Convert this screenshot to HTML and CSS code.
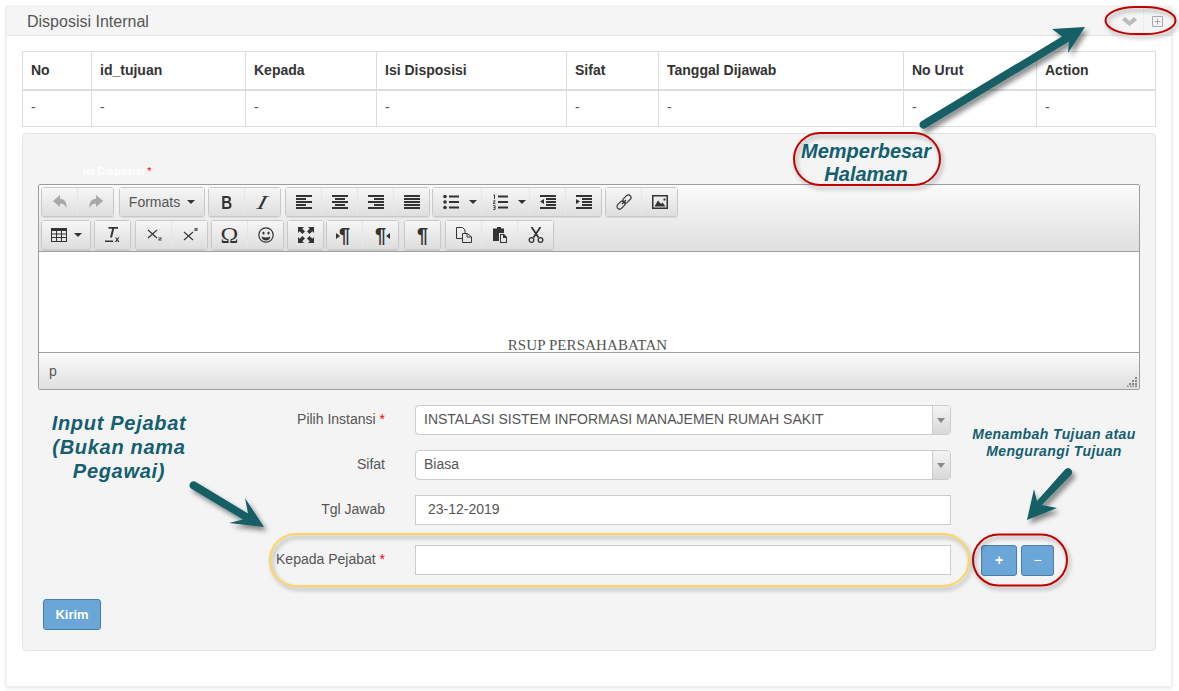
FILE: index.html
```html
<!DOCTYPE html>
<html lang="id">
<head>
    <meta charset="UTF-8">
    <title>Disposisi Internal</title>
    <link rel="stylesheet" href="styles.css">
</head>
<body>
    <svg class="defs" width="0" height="0">
        <symbol id="i-undo" viewBox="0 0 16 16"><path d="M8 1 1 7l7 6V9.500c3 0 5 1.200 6.500 4.500.5-5.500-1.800-9-6.500-9.300z"/></symbol>
        <symbol id="i-redo" viewBox="0 0 16 16"><path d="M8 1l7 6-7 6V9.500c-3 0-5 1.200-6.500 4.500C1 8.500 3.300 5 8 4.700z"/></symbol>
        <symbol id="i-left" viewBox="0 0 16 16"><path d="M0 1h16v2H0zM0 4h10v2H0zM0 7h16v2H0zM0 10h10v2H0zM0 13h16v2H0z"/></symbol>
        <symbol id="i-center" viewBox="0 0 16 16"><path d="M0 1h16v2H0zM3 4h10v2H3zM0 7h16v2H0zM3 10h10v2H3zM0 13h16v2H0z"/></symbol>
        <symbol id="i-right" viewBox="0 0 16 16"><path d="M0 1h16v2H0zM6 4h10v2H6zM0 7h16v2H0zM6 10h10v2H6zM0 13h16v2H0z"/></symbol>
        <symbol id="i-justify" viewBox="0 0 16 16"><path d="M0 1h16v2H0zM0 4h16v2H0zM0 7h16v2H0zM0 10h16v2H0zM0 13h16v2H0z"/></symbol>
        <symbol id="i-bullist" viewBox="0 0 16 16"><circle cx="2" cy="2.500" r="1.800"/><circle cx="2" cy="8" r="1.800"/><circle cx="2" cy="13.500" r="1.800"/><path d="M6 1.500h10v2H6zM6 7h10v2H6zM6 12.500h10v2H6z"/></symbol>
        <symbol id="i-numlist" viewBox="0 0 16 16"><path d="M6 1.500h10v2H6zM6 7h10v2H6zM6 12.500h10v2H6z"/><path d="M1.500 1 3 .3V5H2V1.700l-.5.2zM1 6.500h2.500v.8L2 9.300h1.500v.7H1v-.7l1.500-2H1zM1 11.300h2.500v4.500H1V15h1.500v-1H1.500v-.7h1v-1.200H1z"/></symbol>
        <symbol id="i-outdent" viewBox="0 0 16 16"><path d="M0 1h16v2H0zM6 4h10v2H6zM6 7h10v2H6zM6 10h10v2H6zM0 13h16v2H0zM4 5v5L0 7.500z"/></symbol>
        <symbol id="i-indent" viewBox="0 0 16 16"><path d="M0 1h16v2H0zM6 4h10v2H6zM6 7h10v2H6zM6 10h10v2H6zM0 13h16v2H0zM0 5v5l4-2.500z"/></symbol>
        <symbol id="i-link" viewBox="0 0 16 16"><g fill="none" stroke="#333" stroke-width="1.200"><rect x="8.300" y=".3" width="5.200" height="9.400" rx="2.600" transform="rotate(45 10.900 5)"/><rect x="2.500" y="6.300" width="5.200" height="9.400" rx="2.600" transform="rotate(45 5.100 11)"/><path d="M6 10l4-4"/></g></symbol>
        <symbol id="i-image" viewBox="0 0 16 16"><path fill-rule="evenodd" d="M0 1h16v14H0zM1.500 2.500v11h13v-11z"/><path d="M2.500 12.500l3.500-6 3 3.500 1.500-1.500 3 4zM11.500 4.500h2v2h-2z"/></symbol>
        <symbol id="i-table" viewBox="0 0 16 16"><path fill-rule="evenodd" d="M0 1h16v14H0zM1 4v2.500h4V4zm5 0v2.500h4V4zm5 0v2.500h4V4zM1 7.500V10h4V7.500zm5 0V10h4V7.500zm5 0V10h4V7.500zM1 11v3h4v-3zm5 0v3h4v-3zm5 0v3h4v-3z"/></symbol>
        <symbol id="i-clear" viewBox="0 0 16 16"><path d="M3.500 0H13v1.800H9.200L7 10.500H5l2.200-8.700H3.500zM0 13.500h8V15H0zM10 10.500h1.300l.9 1.300.9-1.300h1.400l-1.600 2 1.600 2.500h-1.400l-.9-1.500-.9 1.500H9.900l1.600-2.500z"/></symbol>
        <symbol id="i-sub" viewBox="0 0 16 16"><path d="M2 3l9 8M11 3l-9 8" fill="none" stroke="#333" stroke-width="1.100"/><path d="M12.500 10.500h3v1.700h-2v.6h2v.7h-3v-1.700h2v-.6h-2z"/></symbol>
        <symbol id="i-sup" viewBox="0 0 16 16"><path d="M2 5l9 8M11 5l-9 8" fill="none" stroke="#333" stroke-width="1.100"/><path d="M12.500 1h3v1.700h-2v.6h2V4h-3V2.300h2v-.6h-2z"/></symbol>
        <symbol id="i-smile" viewBox="0 0 16 16"><circle cx="8" cy="8" r="7.200" fill="none" stroke="#333" stroke-width="1.200"/><ellipse cx="5.500" cy="6" rx="1.100" ry="1.500"/><ellipse cx="10.500" cy="6" rx="1.100" ry="1.500"/><path d="M3.500 9.500c2.500 1.300 6.500 1.300 9 0-.4 2.700-2.300 4-4.500 4s-4.100-1.300-4.500-4z"/></symbol>
        <symbol id="i-full" viewBox="0 0 16 16"><path d="M0 0h6L4.300 1.700 7 4.400 4.400 7 1.700 4.300 0 6zM16 0v6l-1.700-1.700L11.600 7 9 4.400l2.700-2.700L10 0zM0 16v-6l1.700 1.700L4.400 9 7 11.600l-2.700 2.700L6 16zM16 16h-6l1.700-1.700L9 11.600 11.600 9l2.700 2.700L16 10z"/></symbol>
        <symbol id="i-copy" viewBox="0 0 16 16"><g fill="none" stroke="#333" stroke-width="1"><path d="M6.500 11.500h-6V.5h6l2.500 2.500v3"/><path d="M6.500 6.500h5l4 3.500v5.500h-9zM11 6.500V10h4.500"/></g></symbol>
        <symbol id="i-paste" viewBox="0 0 16 16"><path d="M5 0h4v1.500h3V6H7v8H1V1.500h4z"/><path fill-rule="evenodd" d="M8 7h4l3 3v6H8zm1 1v7h5v-4h-3V8z"/></symbol>
        <symbol id="i-cut" viewBox="0 0 16 16"><path d="M3.500 0l7 10.500M12.500 0l-7 10.500" fill="none" stroke="#333" stroke-width="1.800"/><circle cx="3.500" cy="13" r="2.300" fill="none" stroke="#333" stroke-width="1.300"/><circle cx="12.500" cy="13" r="2.300" fill="none" stroke="#333" stroke-width="1.300"/></symbol>
    </svg>

    <div class="portlet">
        <div class="portlet-title">
            <span class="caption">Disposisi Internal</span>
            <div class="tools">
                <svg class="chevron" width="15" height="9" viewBox="0 0 15 9"><path d="M0 3 3 0l4.500 4L12 0l3 3-7.500 6z"/></svg>
                <span class="tool-sep"></span>
                <svg class="expand" width="11" height="11" viewBox="0 0 11 11"><path d="M.5.5h10v10H.5zM5.500 2.500v6M2.500 5.500h6"/></svg>
            </div>
        </div>
        <div class="portlet-body">
            <table class="data-table">
                <thead>
                    <tr>
                        <th class="col-no">No</th>
                        <th class="col-id">id_tujuan</th>
                        <th class="col-kepada">Kepada</th>
                        <th class="col-isi">Isi Disposisi</th>
                        <th class="col-sifat">Sifat</th>
                        <th class="col-tgl">Tanggal Dijawab</th>
                        <th class="col-urut">No Urut</th>
                        <th>Action</th>
                    </tr>
                </thead>
                <tbody>
                    <tr><td>-</td><td>-</td><td>-</td><td>-</td><td>-</td><td>-</td><td>-</td><td>-</td></tr>
                </tbody>
            </table>

            <div class="well">
                <div class="editor-label">Isi Disposisi <span class="req">*</span></div>
                <div class="editor">
                    <div class="toolbar">
                        <div class="tool-row">
                            <div class="btn-group">
                                <button class="tb off"><svg class="ico"><use href="#i-undo"/></svg></button>
                                <button class="tb off"><svg class="ico"><use href="#i-redo"/></svg></button>
                            </div>
                            <div class="btn-group ml2"><button class="tb formats">Formats <i class="caret"></i></button></div>
                            <div class="btn-group">
                                <button class="tb"><span class="glyph bold">B</span></button>
                                <button class="tb"><span class="glyph ital">I</span></button>
                            </div>
                            <div class="btn-group ml1">
                                <button class="tb"><svg class="ico"><use href="#i-left"/></svg></button>
                                <button class="tb"><svg class="ico"><use href="#i-center"/></svg></button>
                                <button class="tb"><svg class="ico"><use href="#i-right"/></svg></button>
                                <button class="tb"><svg class="ico"><use href="#i-justify"/></svg></button>
                            </div>
                            <div class="btn-group mln1">
                                <button class="tb wide"><svg class="ico"><use href="#i-bullist"/></svg><i class="caret"></i></button>
                                <button class="tb wide"><svg class="ico"><use href="#i-numlist"/></svg><i class="caret"></i></button>
                                <button class="tb"><svg class="ico"><use href="#i-outdent"/></svg></button>
                                <button class="tb"><svg class="ico"><use href="#i-indent"/></svg></button>
                            </div>
                            <div class="btn-group">
                                <button class="tb"><svg class="ico"><use href="#i-link"/></svg></button>
                                <button class="tb"><svg class="ico"><use href="#i-image"/></svg></button>
                            </div>
                        </div>
                        <div class="tool-row">
                            <div class="btn-group"><button class="tb table-btn"><svg class="ico"><use href="#i-table"/></svg><i class="caret"></i></button></div>
                            <div class="btn-group"><button class="tb"><svg class="ico"><use href="#i-clear"/></svg></button></div>
                            <div class="btn-group ml1">
                                <button class="tb"><svg class="ico"><use href="#i-sub"/></svg></button>
                                <button class="tb"><svg class="ico"><use href="#i-sup"/></svg></button>
                            </div>
                            <div class="btn-group">
                                <button class="tb"><span class="glyph omega">Ω</span></button>
                                <button class="tb"><svg class="ico"><use href="#i-smile"/></svg></button>
                            </div>
                            <div class="btn-group"><button class="tb"><svg class="ico"><use href="#i-full"/></svg></button></div>
                            <div class="btn-group mln1">
                                <button class="tb"><span class="glyph para ltr">¶</span></button>
                                <button class="tb"><span class="glyph para rtl">¶</span></button>
                            </div>
                            <div class="btn-group ml2"><button class="tb"><span class="glyph para">¶</span></button></div>
                            <div class="btn-group ml1">
                                <button class="tb"><svg class="ico"><use href="#i-copy"/></svg></button>
                                <button class="tb"><svg class="ico"><use href="#i-paste"/></svg></button>
                                <button class="tb"><svg class="ico"><use href="#i-cut"/></svg></button>
                            </div>
                        </div>
                    </div>
                    <div class="edit-area"><p class="letterhead">RSUP PERSAHABATAN</p></div>
                    <div class="statusbar">
                        <span>p</span>
                        <svg class="grip" width="10" height="10" viewBox="0 0 10 10"><path d="M8 0h2v2H8zM5 3h2v2H5zM8 3h2v2H8zM2 6h2v2H2zM5 6h2v2H5zM8 6h2v2H8zM0 8.500h1.500V10H0zM3 8.500h1.500V10H3zM5.500 8.500H7V10H5.500zM8 8.500h2V10H8z"/></svg>
                    </div>
                </div>

                <div class="form-row">
                    <label>Pilih Instansi <span class="req">*</span></label>
                    <div class="select"><span>INSTALASI SISTEM INFORMASI MANAJEMEN RUMAH SAKIT</span><b class="select-arrow"></b></div>
                </div>
                <div class="form-row">
                    <label>Sifat</label>
                    <div class="select"><span>Biasa</span><b class="select-arrow"></b></div>
                </div>
                <div class="form-row">
                    <label>Tgl Jawab</label>
                    <div class="input">23-12-2019</div>
                </div>
                <div class="form-row last">
                    <label>Kepada Pejabat <span class="req">*</span></label>
                    <div class="input"></div>
                    <div class="add-remove">
                        <button class="btn-blue plus">+</button>
                        <button class="btn-blue minus">−</button>
                    </div>
                </div>
                <button class="btn-blue kirim">Kirim</button>
            </div>
        </div>
    </div>

    <!-- anotasi di atas screenshot -->
    <svg class="overlay" width="1179" height="691" viewBox="0 0 1179 691">
        <defs>
            <filter id="shade" x="-20%" y="-20%" width="140%" height="140%">
                <feDropShadow dx="3" dy="4" stdDeviation="2.500" flood-color="#000" flood-opacity="0.45"/>
            </filter>
        </defs>
        <g filter="url(#shade)" fill="#135e65" stroke="none">
            <path d="M921 121.600 1062 36.400 1052 29 1085 27 1068 53 1069 41.400 925 128.400a4 4 0 0 1-4-6.800z"/>
            <path d="M195 481.600 248 513.400 245 498 264 527 229 523 243 519.600 191 488.400a4 4 0 0 1 4-6.800z"/>
            <path d="M1065 469.500a4 4 0 0 1 6 5.500L1042 505 1057 508 1027 520 1034 489 1037 501z"/>
        </g>
        <g fill="none" stroke-width="2">
            <rect class="oval-red" x="1105.500" y="7" width="70" height="27" rx="30" ry="13.500"/>
            <rect class="oval-red" x="794" y="133" width="146" height="52" rx="26"/>
            <rect class="oval-red" x="973" y="534.500" width="94" height="51" rx="25.500"/>
            <rect class="oval-yellow" x="270" y="534" width="699" height="52" rx="26"/>
        </g>
    </svg>
    <div class="note note-zoom">Memperbesar<br>Halaman</div>
    <div class="note note-input">Input Pejabat<br>(Bukan nama<br>Pegawai)</div>
    <div class="note note-add">Menambah Tujuan atau<br>Mengurangi Tujuan</div>
</body>
</html>
```

FILE: styles.css
```css
* {
    box-sizing: border-box;
}
body {
    position: relative;
    width: 1179px;
    height: 691px;
    margin: 0;
    overflow: hidden;
    background: #fff;
    font-family: "Liberation Sans", Arial, sans-serif;
    font-size: 14px;
    color: #555;
}
.defs {
    position: absolute;
}

/* portlet */
.portlet {
    width: 1166px;
    height: 681px;
    margin: 6px 0 0 6px;
    border: 1px solid #eee;
    box-shadow: 0 1px 4px rgba(0, 0, 0, 0.12);
}
.portlet-title {
    display: flex;
    align-items: center;
    justify-content: space-between;
    height: 29px;
    padding: 0 8px 0 20px;
    background: #f5f5f5;
    border-bottom: 1px solid #e5e5e5;
}
.caption {
    padding-top: 2px;
    font-size: 16px;
    color: #555;
}
.tools {
    display: flex;
    align-items: center;
    height: 100%;
}
.chevron {
    margin-top: 1px;
    fill: #bbb;
}
.tool-sep {
    width: 1px;
    height: 100%;
    margin: 0 8px 0 6px;
    background: #ececec;
}
.expand {
    fill: none;
    stroke: #aaa;
    stroke-width: 1;
}
.portlet-body {
    padding: 15px 15px 0;
}

/* tabel */
.data-table {
    width: 1134px;
    border-collapse: collapse;
    table-layout: fixed;
    margin-bottom: 6px;
}
.data-table th,
.data-table td {
    height: 37px;
    padding: 0 8px;
    border: 1px solid #ddd;
    text-align: left;
    font-size: 14px;
    color: #333;
}
.data-table th {
    height: 38px;
    border-bottom-width: 2px;
    font-weight: bold;
}
.data-table td {
    padding-bottom: 2px;
    color: #555;
}
.col-no { width: 69px; }
.col-id { width: 154px; }
.col-kepada { width: 131px; }
.col-isi { width: 190px; }
.col-sifat { width: 92px; }
.col-tgl { width: 245px; }
.col-urut { width: 133px; }

/* kotak form */
.well {
    height: 518px;
    padding: 31px 15px 0;
    background: #f4f4f4;
    border: 1px solid #e3e3e3;
    border-radius: 4px;
}
.editor-label {
    height: 19px;
    padding-left: 45px;
    font-size: 10.5px;
    font-weight: bold;
    line-height: 12px;
    color: #fff;
}
.req {
    color: #f00;
    font-weight: normal;
}

/* editor */
.editor {
    width: 1102px;
    height: 206px;
    border: 1px solid #9e9e9e;
    border-radius: 2px;
}
.toolbar {
    height: 67px;
    padding: 2px 2px 0;
    background: linear-gradient(#fbfbfb, #dfdfdf);
    border-bottom: 1px solid #9e9e9e;
}
.tool-row {
    display: flex;
    gap: 3px;
    height: 33px;
    padding-bottom: 3px;
}
.btn-group {
    display: flex;
    border: 1px solid #c8c8c8;
    border-radius: 3px;
    box-shadow: 0 1px 1px rgba(0, 0, 0, 0.08);
}
.ml1 { margin-left: 1px; }
.ml2 { margin-left: 2px; }
.mln1 { margin-left: -1px; }
.tb {
    display: flex;
    align-items: center;
    justify-content: center;
    gap: 7px;
    width: 36px;
    padding: 0;
    border: 0;
    border-left: 1px solid #e6e6e6;
    background: linear-gradient(#f6f6f6, #dedede);
    font-family: inherit;
    color: #333;
}
.tb:first-child {
    width: 35px;
    border-left: 0;
}
.tb.wide {
    width: 48px;
    justify-content: flex-start;
    gap: 10px;
    padding-left: 10px;
}
.tb.formats {
    width: 84px;
    font-size: 14px;
    color: #555;
}
.tb.table-btn {
    width: 48px;
}
.ico {
    width: 16px;
    height: 16px;
    fill: #333;
}
.off .ico {
    fill: #a8a8a8;
}
.caret {
    width: 0;
    height: 0;
    border-left: 4px solid transparent;
    border-right: 4px solid transparent;
    border-top: 4px solid #333;
}
.glyph {
    position: relative;
    font-size: 18px;
    line-height: 1;
    color: #333;
}
.bold {
    font-size: 19px;
    font-weight: bold;
    transform: scaleX(0.8);
}
.ital {
    font-family: "Liberation Serif", serif;
    font-style: italic;
    font-size: 20px;
    transform: scaleX(1.3) skewX(-12deg);
}
.omega {
    font-family: "Liberation Serif", serif;
    font-size: 24px;
}
.para {
    font-weight: bold;
    font-size: 20px;
}
.ltr::before,
.rtl::after {
    content: "";
    position: absolute;
    top: 8px;
    border-top: 3px solid transparent;
    border-bottom: 3px solid transparent;
}
.ltr::before {
    left: -3px;
    border-left: 4px solid #333;
}
.rtl::after {
    right: -4px;
    border-right: 4px solid #333;
}
.edit-area {
    height: 100px;
    overflow: hidden;
    background: #fff;
}
.letterhead {
    margin: 87px 0 0;
    padding-right: 3px;
    text-align: center;
    font-family: "Liberation Serif", serif;
    font-size: 15px;
    letter-spacing: 0.1px;
    line-height: 13px;
    color: #555;
}
.statusbar {
    display: flex;
    align-items: center;
    justify-content: space-between;
    height: 37px;
    padding: 0 2px 0 10px;
    background: linear-gradient(#fbfbfb, #dfdfdf);
    border-top: 1px solid #9e9e9e;
    font-size: 14px;
    color: #555;
}
.grip {
    align-self: flex-end;
    margin-bottom: 2px;
    fill: #888;
}

/* baris form */
.form-row {
    display: flex;
    align-items: center;
    height: 30px;
    margin-top: 15px;
    margin-left: -15px;
}
.form-row.last {
    margin-top: 20px;
}
.form-row label {
    width: 362px;
    margin-right: 30px;
    padding-bottom: 2px;
    text-align: right;
}
.select,
.input {
    width: 536px;
    height: 30px;
    flex: none;
    background: #fff;
    border: 1px solid #ccc;
    line-height: 26px;
}
.select {
    display: flex;
    justify-content: space-between;
    padding-left: 8px;
    border-radius: 4px;
    overflow: hidden;
}
.select-arrow {
    position: relative;
    width: 18px;
    background: linear-gradient(#f4f4f4, #d8d8d8);
    border-left: 1px solid #ccc;
}
.select-arrow::after {
    content: "";
    position: absolute;
    top: 12px;
    left: 4px;
    border-left: 4px solid transparent;
    border-right: 4px solid transparent;
    border-top: 5px solid #888;
}
.input {
    padding-left: 12px;
}
.add-remove {
    display: flex;
    gap: 4px;
    margin-left: 30px;
}
.btn-blue {
    padding: 0;
    background: #6aa6d8;
    border: 1px solid #4a7ea9;
    border-radius: 3px;
    font-family: inherit;
    font-weight: bold;
    color: #fff;
}
.plus {
    width: 36px;
    height: 31px;
    font-size: 14px;
}
.minus {
    width: 33px;
    height: 31px;
    font-size: 14px;
    font-weight: normal;
}
.kirim {
    display: block;
    width: 58px;
    height: 31px;
    margin: 24px 0 0 5px;
    font-size: 13px;
}

/* anotasi */
.overlay {
    position: absolute;
    top: 0;
    left: 0;
    pointer-events: none;
}
.oval-red {
    stroke: #c00000;
    filter: drop-shadow(2px 3px 2px rgba(0, 0, 0, 0.35));
}
.oval-yellow {
    stroke: #ffd45f;
    filter: drop-shadow(2px 3px 2px rgba(0, 0, 0, 0.35));
}
.note {
    position: absolute;
    text-align: center;
    font-weight: bold;
    font-style: italic;
    color: #135e6f;
}
.note-zoom {
    left: 786px;
    top: 140px;
    width: 160px;
    font-size: 20px;
    line-height: 23px;
}
.note-input {
    left: 39px;
    top: 411px;
    width: 160px;
    font-size: 20px;
    line-height: 24px;
    letter-spacing: 0.7px;
}
.note-add {
    left: 954px;
    top: 426px;
    width: 200px;
    font-size: 14px;
    line-height: 17px;
    letter-spacing: 0.4px;
}
```
